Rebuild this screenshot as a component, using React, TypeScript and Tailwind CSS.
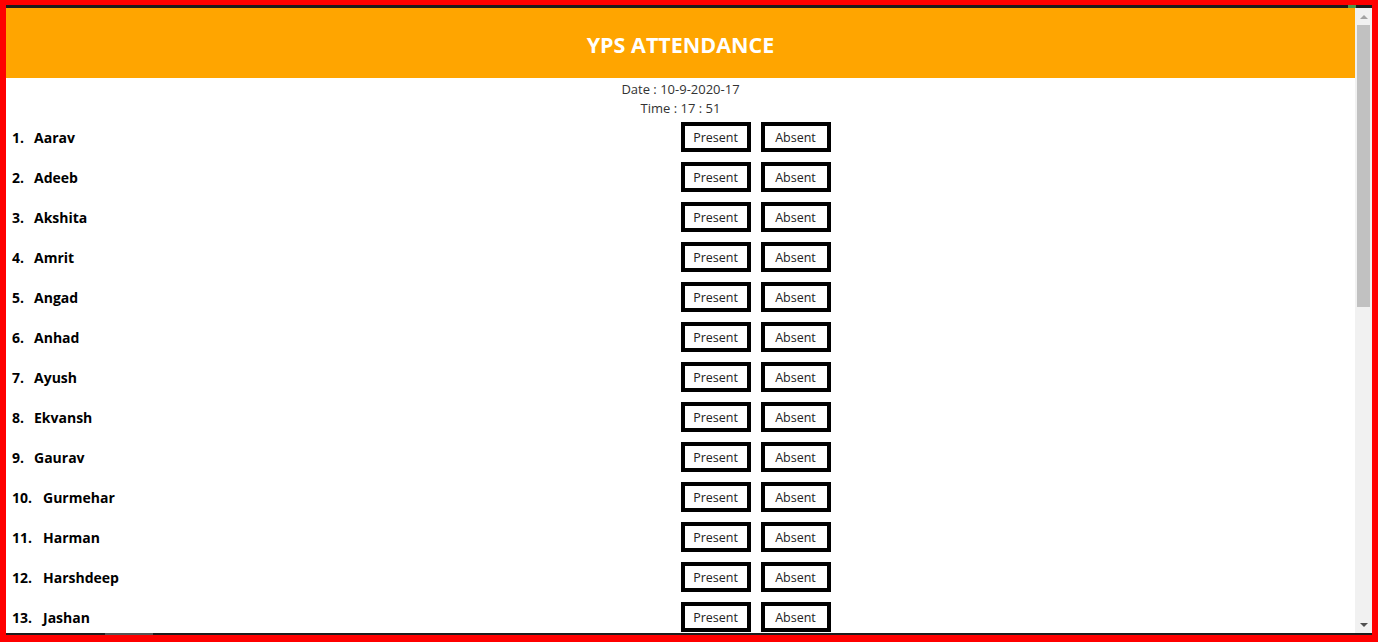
const students = [
  'Aarav',
  'Adeeb',
  'Akshita',
  'Amrit',
  'Angad',
  'Anhad',
  'Ayush',
  'Ekvansh',
  'Gaurav',
  'Gurmehar',
  'Harman',
  'Harshdeep',
  'Jashan',
];

function Scrollbar() {
  return (
    <div className="w-[17px] shrink-0 bg-[#f1f1f1] flex flex-col items-center">
      <div className="h-[17px] w-full flex items-center justify-center">
        <div className="w-0 h-0 border-l-[4px] border-r-[4px] border-b-[4px] border-l-transparent border-r-transparent border-b-[#a3a3a3]" />
      </div>
      <div className="w-[13px] h-[282px] bg-[#c1c1c1]" />
      <div className="flex-1" />
      <div className="h-[17px] w-full flex items-center justify-center">
        <div className="w-0 h-0 border-l-[4px] border-r-[4px] border-t-[4px] border-l-transparent border-r-transparent border-t-[#505050]" />
      </div>
    </div>
  );
}

export default function App() {
  return (
    <div
      className="h-screen w-full bg-[#ff0000] pl-[6px] pr-[6px] pt-[5px] pb-[7px] flex flex-col overflow-hidden"
      style={{ fontFamily: '"Open Sans", "Noto Sans", sans-serif' }}
    >
      <div className="h-[3px] shrink-0 bg-[#1c1c1c] flex justify-end">
        <div className="w-[8px] bg-[#4a9a4a] mr-[16px]" />
      </div>

      <div className="flex flex-1 min-h-0">
        <div className="flex-1 min-w-0 bg-white overflow-hidden">
          <header className="h-[70px] bg-[#ffa500] flex items-center justify-center pt-[4px]">
            <h1 className="text-white font-bold text-[21.5px]">YPS ATTENDANCE</h1>
          </header>

          <div className="pt-[2px] text-center text-[13px] leading-[19px] text-[#333]">
            <p>Date : 10-9-2020-17</p>
            <p>Time : 17 : 51</p>
          </div>

          <ul className="-mt-[1px]">
            {students.map((name, i) => (
              <li key={name} className="grid grid-cols-2 h-[40px] items-center">
                <div className="flex items-center pl-[6px] text-[14px] font-bold text-black">
                  <span>{i + 1}.</span>
                  <span className={i + 1 >= 10 ? 'ml-[11px]' : 'ml-[10px]'}>{name}</span>
                </div>
                <div className="flex items-center gap-[10px]">
                  <button className="w-[70px] h-[30px] border-4 border-black bg-white pt-[2px] text-[12.5px] text-[#222]">
                    Present
                  </button>
                  <button className="w-[70px] h-[30px] border-4 border-black bg-white pt-[2px] text-[12.5px] text-[#222]">
                    Absent
                  </button>
                </div>
              </li>
            ))}
          </ul>
        </div>
        <Scrollbar />
      </div>

      <div className="h-[2px] shrink-0 bg-[#1c1c1c] flex">
        <div className="ml-[99px] w-[48px] bg-[#555]" />
      </div>
    </div>
  );
}
